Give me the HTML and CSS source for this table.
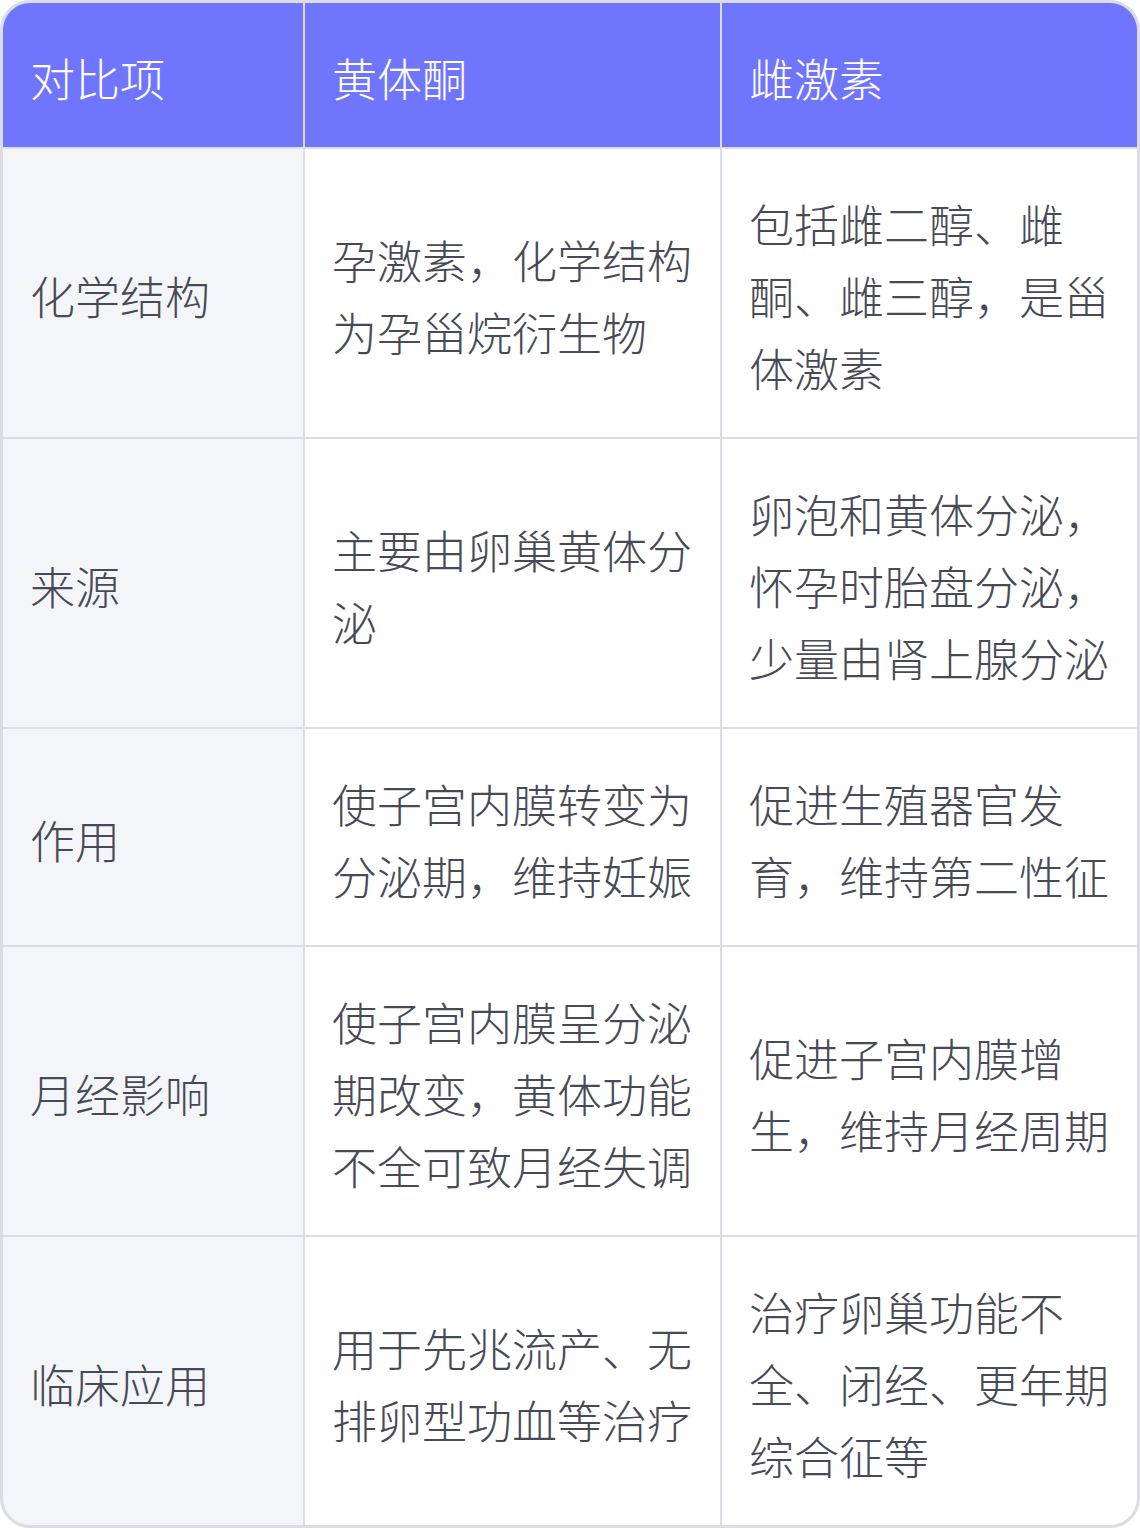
FILE: index.html
```html
<!DOCTYPE html>
<html lang="zh">
<head>
<meta charset="utf-8">
<link rel="stylesheet" href="styles.css">
</head>
<body>
<div class="table">
  <div class="cell head">对比项</div>
  <div class="cell head">黄体酮</div>
  <div class="cell head">雌激素</div>

  <div class="cell label">化学结构</div>
  <div class="cell">孕激素，化学结构为孕甾烷衍生物</div>
  <div class="cell">包括雌二醇、雌酮、雌三醇，是甾体激素</div>

  <div class="cell label">来源</div>
  <div class="cell">主要由卵巢黄体分泌</div>
  <div class="cell">卵泡和黄体分泌，怀孕时胎盘分泌，少量由肾上腺分泌</div>

  <div class="cell label">作用</div>
  <div class="cell">使子宫内膜转变为分泌期，维持妊娠</div>
  <div class="cell">促进生殖器官发育，维持第二性征</div>

  <div class="cell label">月经影响</div>
  <div class="cell">使子宫内膜呈分泌期改变，黄体功能不全可致月经失调</div>
  <div class="cell">促进子宫内膜增生，维持月经周期</div>

  <div class="cell label">临床应用</div>
  <div class="cell">用于先兆流产、无排卵型功血等治疗</div>
  <div class="cell">治疗卵巢功能不全、闭经、更年期综合征等</div>
</div>
</body>
</html>
```

FILE: styles.css
```css
html, body {
  margin: 0;
  padding: 0;
  background: #ffffff;
}

.table {
  width: 1140px;
  height: 1528px;
  box-sizing: border-box;
  border: 3px solid #dcdce2;
  border-radius: 30px;
  overflow: hidden;
  background: #dcdde2;
  display: grid;
  grid-template-columns: 300px 415px 415px;
  grid-template-rows: 144px 288px 288px 216px 288px 288px;
  gap: 2px;
  font-family: "Noto Sans CJK SC", "Noto Sans", sans-serif;
  font-size: 45px;
  font-weight: 300;
  line-height: 72px;
  color: #474a56;
}

.cell {
  background: #ffffff;
  padding: 5px 24px 0 27px;
  display: flex;
  align-items: center;
  line-break: strict;
}

.cell.label {
  background: #f4f5f9;
}

.cell.head {
  background: #7075fe;
  color: #ffffff;
}
```
